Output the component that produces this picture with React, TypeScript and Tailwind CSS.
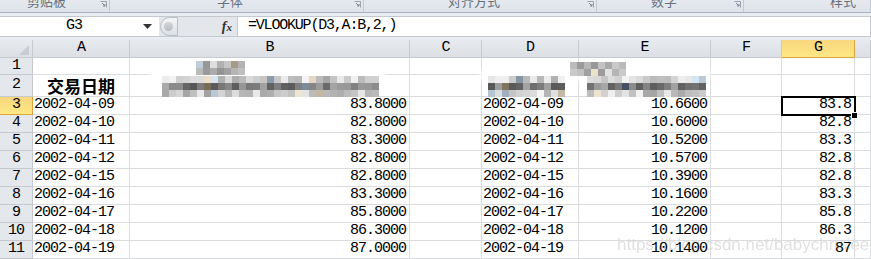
import React from 'react';

const MONO = { fontFamily: '"Liberation Mono", "DejaVu Sans Mono", monospace' };

const COLS = [33, 97, 280, 72, 97, 132, 71, 73, 16];
const LETTERS = ['', 'A', 'B', 'C', 'D', 'E', 'F', 'G', ''];

const dates = ['2002-04-09', '2002-04-10', '2002-04-11', '2002-04-12', '2002-04-15', '2002-04-16', '2002-04-17', '2002-04-18', '2002-04-19'];
const prices = ['83.8000', '82.8000', '83.3000', '82.8000', '82.8000', '83.3000', '85.8000', '86.3000', '87.0000'];
const other = ['10.6600', '10.6000', '10.5200', '10.5700', '10.3900', '10.1600', '10.2200', '10.1200', '10.1400'];
const looked = ['83.8', '82.8', '83.3', '82.8', '82.8', '83.3', '85.8', '86.3', '87'];

// pixelated blur like the censored headers
function Mosaic({ cols, rows, seed, x, y }: { cols: number; rows: number; seed: number; x: number; y: number }) {
  let s = seed;
  const rnd = () => {
    s = (s * 9301 + 49297) % 233280;
    return s / 233280;
  };
  const rects = [];
  for (let r = 0; r < rows; r++) {
    for (let c = 0; c < cols; c++) {
      const base = rows === 3 ? (r === 1 ? 85 : 160) : 145;
      let g = Math.round(base + rnd() * 85);
      if (g > 245) g = 245;
      let fill = `rgb(${g},${g},${g})`;
      const k = rnd();
      if (k > 0.93) fill = `rgb(${g + 10 > 255 ? 255 : g + 10},${g},${g - 20})`;
      else if (k > 0.88) fill = `rgb(${g - 30},${g - 15},${g})`;
      rects.push(<rect key={r + '-' + c} x={c * 7} y={r * 7} width={7} height={7} fill={fill} />);
    }
  }
  return (
    <svg className="absolute" style={{ left: x, top: y }} width={cols * 7} height={rows * 7}>
      {rects}
    </svg>
  );
}

function Launcher() {
  return (
    <svg width="7" height="7" viewBox="0 0 7 7" className="mt-[1px]">
      <path d="M0.5 0.5h6v6" fill="none" stroke="#9aa3ad" strokeWidth="1" />
      <path d="M2 2l3 3M5 3v2h-2" fill="none" stroke="#7a838d" strokeWidth="1" />
    </svg>
  );
}

function Ribbon() {
  const groups = [
    { w: 110, label: '剪贴板', pl: 27, launch: true },
    { w: 254, label: '字体', pl: 107, launch: true },
    { w: 233, label: '对齐方式', pl: 84, launch: true },
    { w: 147, label: '数字', pl: 54, launch: true },
    { w: 127, label: '样式', pl: 86, launch: false },
  ];
  return (
    <div className="flex h-[13px] overflow-hidden border-b border-[#aab2bd] bg-gradient-to-b from-[#e6eaf0] to-[#dde3ea]">
      {groups.map((g, i) => (
        <div
          key={i}
          className="relative flex h-full shrink-0 border-r border-[#c3cad3]"
          style={{ width: g.w }}
        >
          <span
            className="mt-[-7px] text-[13px] leading-[16px] text-[#66707c]"
            style={{ paddingLeft: g.pl, fontFamily: '"Noto Sans CJK SC", sans-serif' }}
          >
            {g.label}
          </span>
          {g.launch && (
            <span className="absolute right-[2px] top-0">
              <Launcher />
            </span>
          )}
        </div>
      ))}
    </div>
  );
}

function FormulaBar() {
  return (
    <div className="flex h-[27px] items-start bg-[#e9ecf0] pt-[3px]">
      <div className="flex h-[21px] w-[159px] items-center border-y border-[#c4c9d0] bg-white">
        <span className="flex-1 pl-[5px] text-center text-[15px] tracking-[-1px] text-black" style={MONO}>
          G3
        </span>
        <svg width="9" height="5" viewBox="0 0 9 5" className="mr-[7px]">
          <path d="M0 0h9L4.5 5z" fill="#333" />
        </svg>
      </div>
      <div className="flex h-[21px] w-[78px] items-center border-y border-[#c4c9d0] bg-[#e3e6ea]">
        <div className="ml-[1px] flex h-[19px] w-[18px] items-center rounded-l-full border border-[#b8bec6] bg-gradient-to-b from-[#f4f5f7] to-[#dde0e4] pl-[3px]">
          <span className="h-[9px] w-[9px] rounded-full bg-gradient-to-b from-[#d2d5da] to-[#b9bdc3]" />
        </div>
        <span
          className="ml-auto mr-[5px] text-[14px] font-bold italic text-[#333]"
          style={{ fontFamily: '"Liberation Serif", serif' }}
        >
          f<span className="text-[11px]">x</span>
        </span>
      </div>
      <div className="flex h-[21px] flex-1 items-center border border-[#c4c9d0] bg-white pl-[10px]">
        <span className="text-[15px] tracking-[-1.2px] text-black" style={MONO}>
          =VLOOKUP(D3,A:B,2,)
        </span>
      </div>
    </div>
  );
}

function HeaderRow() {
  return (
    <div className="flex h-[18px]">
      {COLS.map((w, i) => {
        const sel = i === 7;
        return (
          <div
            key={i}
            className={
              'relative flex shrink-0 items-center justify-center border-b border-r text-[15px] tracking-[-1px] ' +
              (sel
                ? 'border-[#e2a33c] bg-gradient-to-b from-[#f9d67f] to-[#ffe884] text-black'
                : 'border-[#c6c9ce] bg-gradient-to-b from-[#e7eaee] to-[#dce0e5] text-black')
            }
            style={{ width: w, ...MONO }}
          >
            {LETTERS[i]}
            {i === 0 && (
              <svg width="10" height="10" viewBox="0 0 10 10" className="absolute bottom-[2px] right-[3px]">
                <path d="M10 0v10H0z" fill="#c9cdd3" />
              </svg>
            )}
          </div>
        );
      })}
    </div>
  );
}

function Row({ n, h, cells }: { n: number; h: number; cells: React.ReactNode[] }) {
  const sel = n === 3;
  return (
    <div className="flex" style={{ height: h }}>
      <div
        className={
          'flex shrink-0 items-center justify-center border-b border-r text-[15px] tracking-[-1px] text-black ' +
          (sel
            ? 'border-[#e2a33c] bg-gradient-to-b from-[#f9d67f] to-[#ffe884]'
            : 'border-[#c6c9ce] bg-[#e4e7eb]')
        }
        style={{ width: COLS[0], ...MONO }}
      >
        {n}
      </div>
      {COLS.slice(1).map((w, i) => (
        <div
          key={i}
          className="relative flex shrink-0 items-center border-b border-r border-[#dadcdd] bg-white"
          style={{ width: w }}
        >
          {cells[i]}
        </div>
      ))}
    </div>
  );
}

function L({ t }: { t: string }) {
  return (
    <span className="relative z-20 pl-[1px] text-[15px] tracking-[-1px] text-black" style={MONO}>
      {t}
    </span>
  );
}

function R({ t }: { t: string }) {
  return (
    <span className="relative z-20 ml-auto pr-[3px] text-[15px] tracking-[-1px] text-black" style={MONO}>
      {t}
    </span>
  );
}

export default function App() {
  return (
    <div className="relative h-[259px] w-[871px] overflow-hidden bg-white">
      <Ribbon />
      <FormulaBar />
      <HeaderRow />
      <Row n={1} h={17} cells={[]} />
      <Row
        n={2}
        h={22}
        cells={[
          <span
            key="h"
            className="w-full text-center text-[17px] font-bold text-black"
            style={{ fontFamily: '"Noto Sans CJK SC", sans-serif' }}
          >
            交易日期
          </span>,
        ]}
      />
      {dates.map((d, i) => (
        <Row
          key={i}
          n={i + 3}
          h={18}
          cells={[
            <L key="a" t={d} />,
            <R key="b" t={prices[i]} />,
            null,
            <L key="d" t={d} />,
            <R key="e" t={other[i]} />,
            null,
            <R key="g" t={looked[i]} />,
          ]}
        />
      ))}

      {/* active cell G3 with fill handle */}
      <div className="absolute left-[781px] top-[96px] z-10 h-[20px] w-[75px] border-2 border-black" />
      <div className="absolute left-[851px] top-[112px] z-10 h-[7px] w-[7px] border border-white bg-black" />

      {/* censored header titles */}
      <div className="absolute left-[150px] top-[70px] h-[10px] w-[235px] bg-white blur-[2px]" />
      <Mosaic cols={7} rows={2} seed={17} x={196} y={61} />
      <Mosaic cols={31} rows={3} seed={42} x={162} y={76} />
      <div className="absolute left-[480px] top-[70px] h-[10px] w-[230px] bg-white blur-[2px]" />
      <Mosaic cols={8} rows={2} seed={7} x={570} y={62} />
      <Mosaic cols={11} rows={3} seed={91} x={488} y={76} />
      <Mosaic cols={17} rows={3} seed={63} x={587} y={76} />

      {/* watermark */}
      <span
        className="absolute left-[617px] top-[232px] z-10 text-[17px] text-[#d9d9d9] opacity-80"
        style={{ fontFamily: '"Liberation Sans", sans-serif' }}
      >
        https://blog.csdn.net/babychrisiee88
      </span>
    </div>
  );
}
